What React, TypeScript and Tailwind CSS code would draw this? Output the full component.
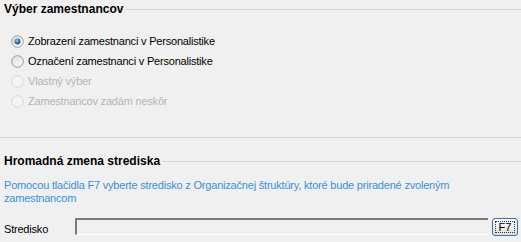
import React from "react";

const font = { fontFamily: '"Liberation Sans", Arial, sans-serif' };

function Radio({ checked, disabled }: { checked?: boolean; disabled?: boolean }) {
  return (
    <svg width="13" height="13" viewBox="0 0 13 13" className="shrink-0">
      <defs>
        <linearGradient id="rg" x1="0" y1="0" x2="1" y2="1">
          <stop offset="0" stopColor="#dcdcd7" />
          <stop offset="1" stopColor="#ffffff" />
        </linearGradient>
        <radialGradient id="dot" cx="0.4" cy="0.35" r="0.7">
          <stop offset="0" stopColor="#9fd3f5" />
          <stop offset="0.5" stopColor="#2f78b8" />
          <stop offset="1" stopColor="#1c4f82" />
        </radialGradient>
      </defs>
      <circle
        cx="6.5"
        cy="6.5"
        r="5.8"
        fill={disabled ? "#f4f4f4" : "url(#rg)"}
        stroke={disabled ? "#d6d6d6" : "#9a9a9a"}
        strokeWidth="1"
      />
      {checked && <circle cx="6.5" cy="6.5" r="3" fill="url(#dot)" />}
    </svg>
  );
}

function Header({ title }: { title: string }) {
  return (
    <div className="flex items-center h-[16px] pl-[4px]">
      <span className="text-[12px] font-bold text-black leading-[16px] whitespace-nowrap">{title}</span>
      <div className="flex-1 ml-[2px] h-px bg-[#d8d8d8]" />
    </div>
  );
}

export default function App() {
  const options = [
    { label: "Zobrazení zamestnanci v Personalistike", checked: true },
    { label: "Označení zamestnanci v Personalistike" },
    { label: "Vlastný výber", disabled: true },
    { label: "Zamestnancov zadám neskôr", disabled: true },
  ];

  return (
    <div className="w-[521px] h-[242px] overflow-hidden bg-[#f0f0f0] text-[11px]" style={font}>
      <div className="pt-[1px]">
        <Header title="Výber zamestnancov" />
      </div>

      <div className="mt-[14px] pl-[11px] flex flex-col tracking-[-0.2px]">
        {options.map((o) => (
          <div key={o.label} className="h-[20px] flex items-center gap-[4px]">
            <Radio checked={o.checked} disabled={o.disabled} />
            <span className={o.disabled ? "text-[#b4b4b4]" : "text-black"}>{o.label}</span>
          </div>
        ))}
      </div>

      <div className="mt-[26px] h-px bg-[#d8d8d8]" />

      <div className="mt-[15px]">
        <Header title="Hromadná zmena strediska" />
      </div>

      <div className="mt-[10px] pl-[4px] pr-[30px] text-[#3b8fd9] leading-[13px] tracking-[-0.2px]">
        Pomocou tlačidla F7 vyberte stredisko z Organizačnej štruktúry, ktoré bude priradené zvoleným zamestnancom
      </div>

      <div className="mt-[13px] flex items-start pl-[4px]">
        <span className="w-[71px] pt-[3px] text-black tracking-[-0.2px]">Stredisko</span>
        <div className="w-[413px] h-[17px] border-t-2 border-l-2 border-t-[#7a7a7a] border-l-[#7a7a7a] border-b border-b-white bg-[#f0f0f0]" />
        <button className="ml-[4px] w-[26px] h-[18px] rounded-[3px] border border-[#3d6fa3] bg-gradient-to-b from-[#fdfdfd] to-[#dedede] p-[2px] flex">
          <span className="flex-1 border border-dotted border-[#333] flex items-center justify-center text-[11px] leading-none text-black">
            F7
          </span>
        </button>
      </div>
    </div>
  );
}
